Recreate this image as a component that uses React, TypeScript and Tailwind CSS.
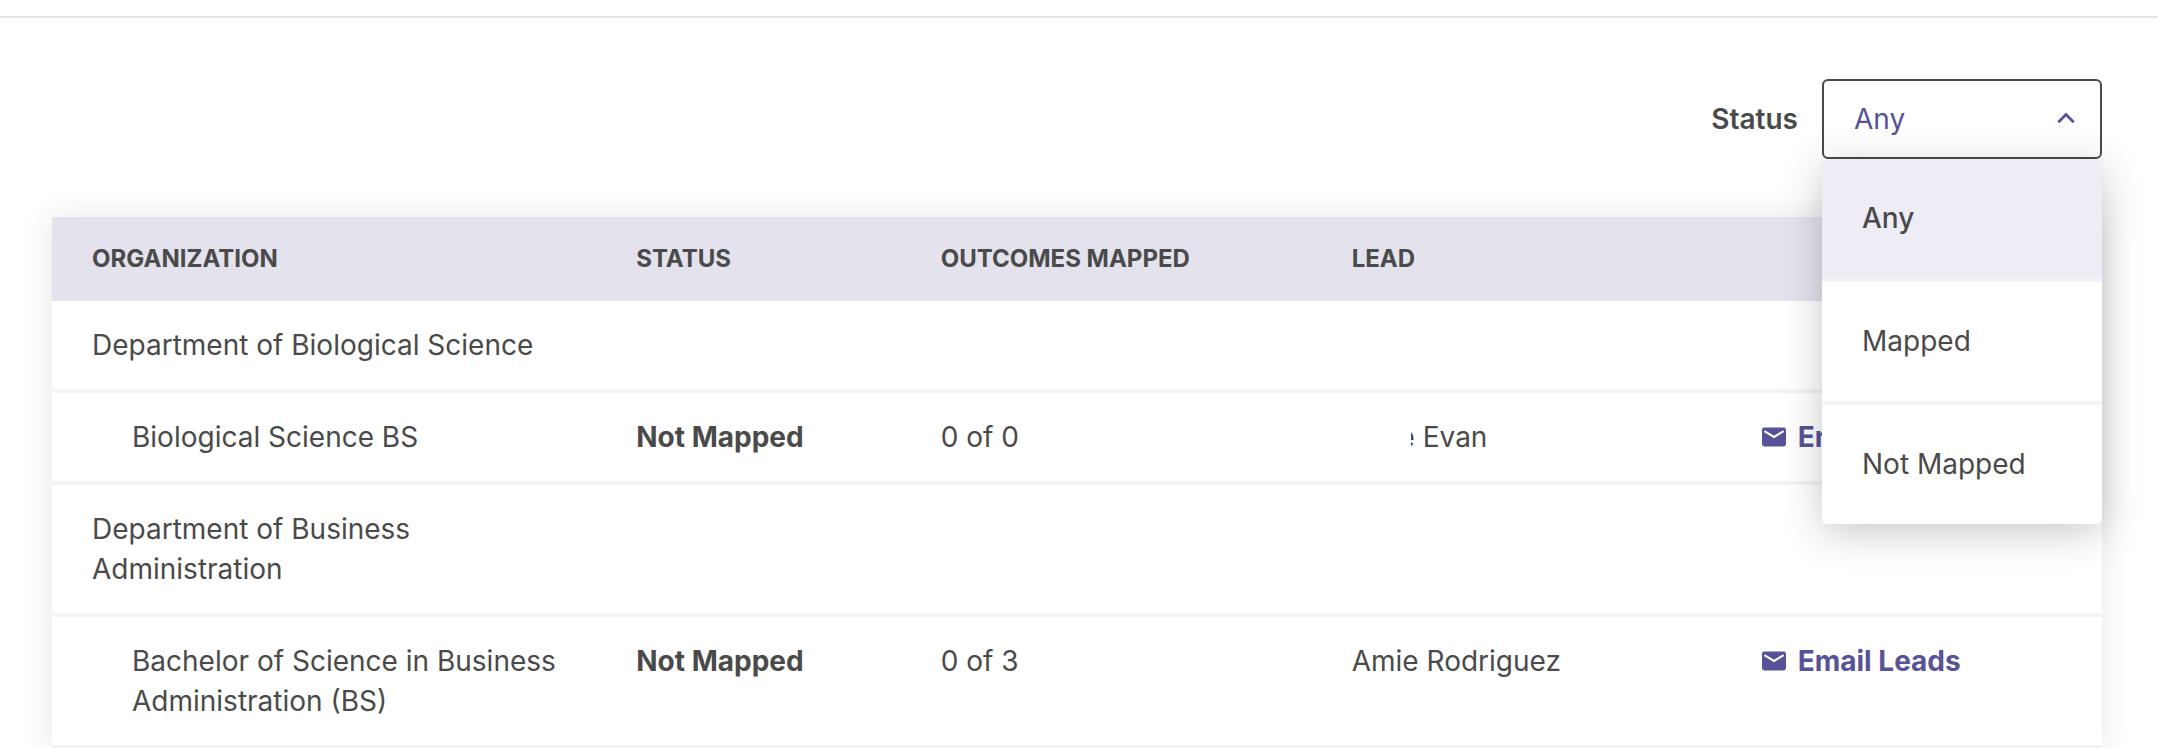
import { useState } from "react";
import type { KeyboardEvent, MouseEvent } from "react";

const options = ["Any", "Mapped", "Not Mapped"];

type Row =
  | { kind: "department"; name: string }
  | {
      kind: "program";
      name: string;
      status: string;
      outcomes: string;
      lead: string;
      clipped?: boolean;
    };

const rows: Row[] = [
  { kind: "department", name: "Department of Biological Science" },
  {
    kind: "program",
    name: "Biological Science BS",
    status: "Not Mapped",
    outcomes: "0 of 0",
    lead: "Evan",
    clipped: true,
  },
  { kind: "department", name: "Department of Business Administration" },
  {
    kind: "program",
    name: "Bachelor of Science in Business Administration (BS)",
    status: "Not Mapped",
    outcomes: "0 of 3",
    lead: "Amie Rodriguez",
  },
];

function MailIcon() {
  return (
    <svg viewBox="0 0 24 20" className="h-5 w-6 shrink-0" aria-hidden="true">
      <rect x="0" y="0.5" width="24" height="19" rx="2.4" fill="currentColor" />
      <path d="M2.4 4.2 12 10l9.6-5.8" fill="none" stroke="#fff" strokeWidth="2.1" />
    </svg>
  );
}

function StatusFilter() {
  const [open, setOpen] = useState(true);
  const [value, setValue] = useState("Any");

  const toggle = (event: MouseEvent) => {
    event.preventDefault();
    setOpen(!open);
  };

  const onKeyDown = (event: KeyboardEvent) => {
    if (event.key === "Escape") setOpen(false);
  };

  return (
    <div className="flex items-center justify-end gap-6">
      <label htmlFor="status" className="font-semibold">
        Status
      </label>
      <div className="relative w-[280px]" onKeyDown={onKeyDown}>
        <select
          id="status"
          value={value}
          onMouseDown={toggle}
          onChange={(event) => setValue(event.target.value)}
          className="block h-20 w-full appearance-none rounded-md border-2 border-[#4a4a4a] bg-white px-[30px] text-[#575396] outline-none"
        >
          {options.map((option) => (
            <option key={option}>{option}</option>
          ))}
        </select>
        <svg
          viewBox="0 0 18 12"
          className="pointer-events-none absolute top-[33px] right-[27px] h-3 w-[18px] text-[#575396]"
          aria-hidden="true"
        >
          <path d="M1.3 10.2 9 2.5l7.7 7.7" fill="none" stroke="currentColor" strokeWidth="2.8" />
        </svg>
        {open && (
          <ul
            role="listbox"
            aria-label="Status"
            className="absolute top-full left-0 z-10 w-full divide-y-4 divide-[#f3f3f3] overflow-hidden rounded-md bg-white shadow-[0_8px_40px_rgba(0,0,0,0.22)]"
          >
            {options.map((option) => (
              <li key={option} role="option" aria-selected={option === value}>
                <button
                  type="button"
                  onClick={() => {
                    setValue(option);
                    setOpen(false);
                  }}
                  className={
                    option === value
                      ? "block w-full bg-[#eeecf5] px-10 py-10 text-left leading-[39px] font-medium"
                      : "block w-full bg-white px-10 py-10 text-left leading-[39px]"
                  }
                >
                  {option}
                </button>
              </li>
            ))}
          </ul>
        )}
      </div>
    </div>
  );
}

export default function App() {
  return (
    <div className="h-screen overflow-hidden bg-white pt-4 font-['Inter',sans-serif] text-[28px] leading-10 text-[#4a4a4a]">
      <main className="border-t-2 border-[#e6e6e6] px-[52px] pt-[61px]">
        <div className="mr-1">
          <StatusFilter />
        </div>
        <div className="mt-[58px] mr-1 shadow-[0_0_30px_rgba(0,0,0,0.1)]">
          <table className="w-full table-fixed border-separate border-spacing-0 bg-white text-left">
            <colgroup>
              <col className="w-[26.55%]" />
              <col className="w-[14.85%]" />
              <col className="w-[20.05%]" />
              <col className="w-[20%]" />
              <col />
            </colgroup>
            <thead className="bg-[#e4e2ec] text-2xl leading-9">
              <tr>
                <th className="py-6 pl-10 font-bold">ORGANIZATION</th>
                <th className="py-6 pl-10 font-bold">STATUS</th>
                <th className="py-6 pl-10 font-bold">OUTCOMES MAPPED</th>
                <th className="py-6 pl-10 font-bold">LEAD</th>
                <td />
              </tr>
            </thead>
            <tbody>
              {rows.map((row) =>
                row.kind === "department" ? (
                  <tr key={row.name}>
                    <td className="border-b-4 border-[#f3f3f3] py-6 pl-10">{row.name}</td>
                    <td colSpan={4} className="border-b-4 border-[#f3f3f3]" />
                  </tr>
                ) : (
                  <tr key={row.name} className="align-top">
                    <td className="border-b-4 border-[#f3f3f3] py-6 pl-20">{row.name}</td>
                    <td className="border-b-4 border-[#f3f3f3] py-6 pl-10 font-bold">{row.status}</td>
                    <td className="border-b-4 border-[#f3f3f3] py-6 pl-10">{row.outcomes}</td>
                    <td className="border-b-4 border-[#f3f3f3] py-6 pl-10">
                      {row.clipped ? (
                        <span className="flex gap-2">
                          <span className="flex w-[63px] justify-end">
                            <span className="flex w-1 justify-end overflow-hidden">e</span>
                          </span>
                          {row.lead}
                        </span>
                      ) : (
                        row.lead
                      )}
                    </td>
                    <td className="border-b-4 border-[#f3f3f3] py-6 pl-10">
                      <a href="#email" className="flex items-center gap-3 font-bold text-[#575396]">
                        <MailIcon />
                        Email Leads
                      </a>
                    </td>
                  </tr>
                ),
              )}
            </tbody>
          </table>
        </div>
      </main>
    </div>
  );
}
